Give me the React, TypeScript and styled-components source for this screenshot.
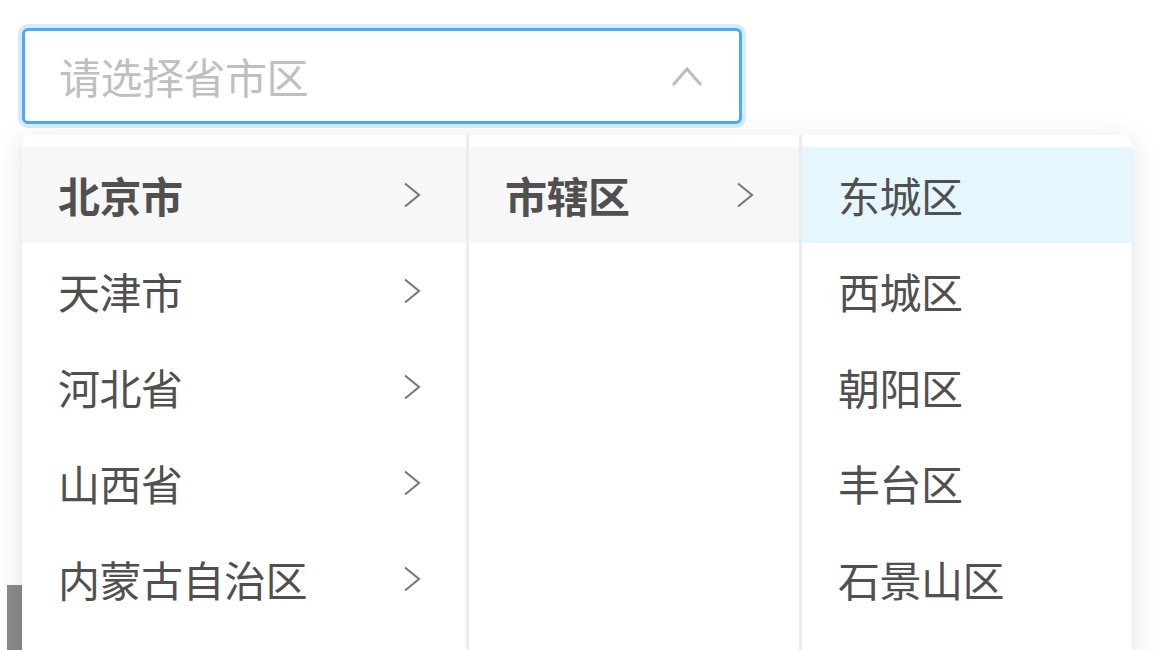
import React from 'react';
import styled, { createGlobalStyle } from 'styled-components';

const GlobalStyle = createGlobalStyle`
  html, body {
    margin: 0;
    padding: 0;
    background: #ffffff;
    overflow: hidden;
  }
  body {
    font-family: "Noto Sans CJK SC", "Noto Sans", sans-serif;
  }
`;

type Option = { label: string; hasChildren?: boolean };

const provinces: Option[] = [
  { label: '北京市', hasChildren: true },
  { label: '天津市', hasChildren: true },
  { label: '河北省', hasChildren: true },
  { label: '山西省', hasChildren: true },
  { label: '内蒙古自治区', hasChildren: true },
];

const cities: Option[] = [{ label: '市辖区', hasChildren: true }];

const districts: Option[] = [
  { label: '东城区' },
  { label: '西城区' },
  { label: '朝阳区' },
  { label: '丰台区' },
  { label: '石景山区' },
];

const Page = styled.div`
  position: relative;
  width: 1158px;
  height: 650px;
  padding: 28px 0 0 22px;
  box-sizing: border-box;
`;

// edge of whatever sits under the popup
const PageEdge = styled.div`
  position: absolute;
  left: 7px;
  top: 585px;
  width: 15px;
  height: 65px;
  background: #8a8a8a;
`;

const SelectWrap = styled.div`
  position: relative;
  width: 720px;
`;

const Selector = styled.div`
  display: flex;
  align-items: center;
  justify-content: space-between;
  height: 96px;
  padding: 0 36px 0 34px;
  box-sizing: border-box;
  border: 3px solid #4fa9f7;
  border-radius: 6px;
  background: #fff;
  box-shadow: 0 0 0 4px rgba(24, 144, 255, 0.18);
`;

const Placeholder = styled.span`
  font-size: 42px;
  line-height: 60px;
  color: #bfbfbf;
  letter-spacing: -0.5px;
`;

const Dropdown = styled.div`
  position: absolute;
  top: 107px;
  left: 0;
  z-index: 2;
  display: flex;
  height: 540px;
  background: #fff;
  border-radius: 6px 10px 0 0;
  box-shadow: 0 6px 24px 6px rgba(0, 0, 0, 0.07),
    0 3px 8px -4px rgba(0, 0, 0, 0.12);
  overflow: hidden;
`;

const Menu = styled.ul<{ $width: number; $last?: boolean }>`
  list-style: none;
  margin: 0;
  padding: 12px 0;
  width: ${(p) => p.$width}px;
  box-sizing: border-box;
  border-right: ${(p) => (p.$last ? 'none' : '3px solid #ececec')};
`;

const Item = styled.li<{ $active?: 'path' | 'leaf' }>`
  display: flex;
  align-items: center;
  justify-content: space-between;
  height: 96px;
  padding: 0 45px 0 36px;
  font-size: 42px;
  line-height: 60px;
  color: #505050;
  font-weight: ${(p) => (p.$active === 'path' ? 700 : 400)};
  background: ${(p) =>
    p.$active === 'path' ? '#f7f7f7' : p.$active === 'leaf' ? '#e6f6fe' : 'transparent'};
  letter-spacing: -0.5px;
`;

const Arrow = () => (
  <svg width="18" height="26" viewBox="0 0 18 26">
    <path d="M2 1.5 L16 13 L2 24.5" fill="none" stroke="#7a7a7a" strokeWidth="2.2" />
  </svg>
);

const UpArrow = () => (
  <svg width="32" height="21" viewBox="0 0 32 21">
    <path d="M2 19 L16 3 L30 19" fill="none" stroke="#bdbdbd" strokeWidth="3" />
  </svg>
);

const MenuColumn = ({
  items,
  width,
  active,
  kind,
  last,
}: {
  items: Option[];
  width: number;
  active: number;
  kind: 'path' | 'leaf';
  last?: boolean;
}) => (
  <Menu $width={width} $last={last}>
    {items.map((item, i) => (
      <Item key={item.label} $active={i === active ? kind : undefined}>
        <span>{item.label}</span>
        {item.hasChildren && <Arrow />}
      </Item>
    ))}
  </Menu>
);

export default function App() {
  return (
    <>
      <GlobalStyle />
      <Page>
        <PageEdge />
        <SelectWrap>
          <Selector>
            <Placeholder>请选择省市区</Placeholder>
            <UpArrow />
          </Selector>
          <Dropdown>
            <MenuColumn items={provinces} width={447} active={0} kind="path" />
            <MenuColumn items={cities} width={333} active={0} kind="path" />
            <MenuColumn items={districts} width={330} active={0} kind="leaf" last />
          </Dropdown>
        </SelectWrap>
      </Page>
    </>
  );
}
